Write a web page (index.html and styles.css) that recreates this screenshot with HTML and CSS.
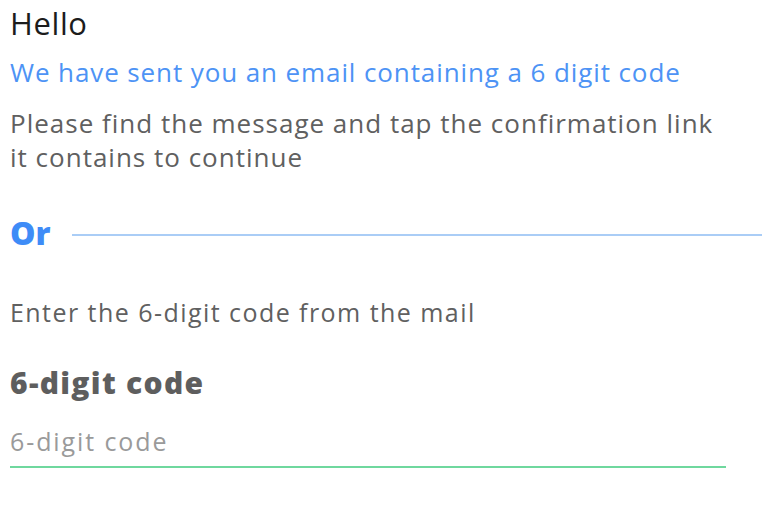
FILE: index.html
```html
<!DOCTYPE html>
<html>
<head>
<meta charset="utf-8">
<link rel="stylesheet" href="styles.css">
</head>
<body>
<main class="page">
  <h1 class="title">Hello</h1>
  <p class="sent">We have sent you an email containing a 6 digit code</p>
  <p class="info">Please find the message and tap the confirmation link<br>it contains to continue</p>
  <div class="or-row">
    <span class="or">Or</span>
    <span class="or-line"></span>
  </div>
  <p class="enter">Enter the 6-digit code from the mail</p>
  <label class="label" for="code">6-digit code</label>
  <input class="code-input" id="code" type="text" placeholder="6-digit code">
</main>
</body>
</html>
```
FILE: styles.css
```css
html, body {
  margin: 0;
  padding: 0;
  background: #ffffff;
}
.page {
  font-family: "Open Sans", "Noto Sans", sans-serif;
  padding: 0 18px 0 10px;
  display: flex;
  flex-direction: column;
  align-items: flex-start;
}
.title {
  margin: 0;
  font-size: 31px;
  font-weight: 500;
  color: #1c1c1c;
  line-height: 46px;
  letter-spacing: 0.6px;
}
.sent {
  margin: 9px 0 0;
  font-size: 26px;
  color: #4d93f5;
  line-height: 34px;
  letter-spacing: 0.9px;
  white-space: nowrap;
}
.info {
  margin: 17px 0 0;
  font-size: 26px;
  color: #606060;
  line-height: 34px;
  letter-spacing: 1px;
  white-space: nowrap;
}
.or-row {
  align-self: stretch;
  display: flex;
  align-items: center;
  gap: 21px;
  margin-top: 41px;
  height: 40px;
}
.or {
  font-size: 32px;
  font-weight: 800;
  color: #3e8cf7;
  line-height: 40px;
  padding-bottom: 5px;
}
.or-line {
  flex: 1;
  height: 2px;
  background: #aacdf6;
}
.enter {
  margin: 40px 0 0;
  font-size: 25px;
  color: #606060;
  line-height: 34px;
  letter-spacing: 1.45px;
  white-space: nowrap;
}
.label {
  margin-top: 34px;
  font-size: 30px;
  font-weight: 800;
  color: #5e5e5e;
  line-height: 40px;
  letter-spacing: 1.3px;
}
.code-input {
  margin-top: 22px;
  width: 716px;
  box-sizing: border-box;
  border: none;
  border-bottom: 2px solid #6fd89e;
  outline: none;
  padding: 0 0 9px;
  font-family: "Open Sans", "Noto Sans", sans-serif;
  font-size: 25px;
  color: #606060;
  line-height: 32px;
  height: 43px;
  letter-spacing: 1.9px;
}
.code-input::placeholder {
  color: #9a9a9a;
}
```
